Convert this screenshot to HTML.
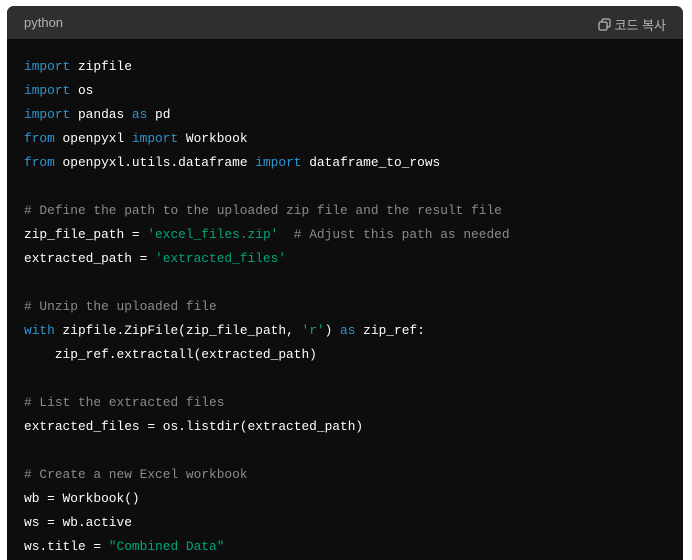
<!DOCTYPE html>
<html><head><meta charset="utf-8"><style>
html,body{margin:0;padding:0;background:#fff;width:692px;height:560px;overflow:hidden}
.box{position:absolute;left:7px;top:6px;width:676px;height:554px;background:#0d0d0d;border-radius:7px 7px 0 0;overflow:hidden}
.hdr{height:33px;background:#2f2f2f;color:#b4b4b4;font:13px "Liberation Sans","Noto Sans CJK KR",sans-serif;position:relative}
.hdr .l{position:absolute;left:17px;top:9px}
.hdr .r{position:absolute;right:17px;top:9px;display:flex;align-items:center;gap:4px}
pre{margin:0;position:absolute;left:17px;top:49px;font:12.85px/24px "Liberation Mono",monospace;color:#fff}
.k{color:#2e95d3}.s{color:#00a67d}.c{color:#8a8a8a}
</style></head><body>
<div class="box">
<div class="hdr"><span class="l">python</span><span class="r"><svg width="13" height="13" viewBox="0 0 13 13" fill="none" stroke="#b4b4b4" stroke-width="1.3"><rect x="1" y="4" width="8" height="8" rx="1.5"/><path d="M4 4V2.5A1.5 1.5 0 0 1 5.5 1h5A1.5 1.5 0 0 1 12 2.5v5A1.5 1.5 0 0 1 10.5 9H9"/></svg>코드 복사</span></div>
<pre><span class="k">import</span> zipfile
<span class="k">import</span> os
<span class="k">import</span> pandas <span class="k">as</span> pd
<span class="k">from</span> openpyxl <span class="k">import</span> Workbook
<span class="k">from</span> openpyxl.utils.dataframe <span class="k">import</span> dataframe_to_rows

<span class="c"># Define the path to the uploaded zip file and the result file</span>
zip_file_path = <span class="s">'excel_files.zip'</span>  <span class="c"># Adjust this path as needed</span>
extracted_path = <span class="s">'extracted_files'</span>

<span class="c"># Unzip the uploaded file</span>
<span class="k">with</span> zipfile.ZipFile(zip_file_path, <span class="s">'r'</span>) <span class="k">as</span> zip_ref:
    zip_ref.extractall(extracted_path)

<span class="c"># List the extracted files</span>
extracted_files = os.listdir(extracted_path)

<span class="c"># Create a new Excel workbook</span>
wb = Workbook()
ws = wb.active
ws.title = <span class="s">"Combined Data"</span></pre>
</div>
</body></html>
